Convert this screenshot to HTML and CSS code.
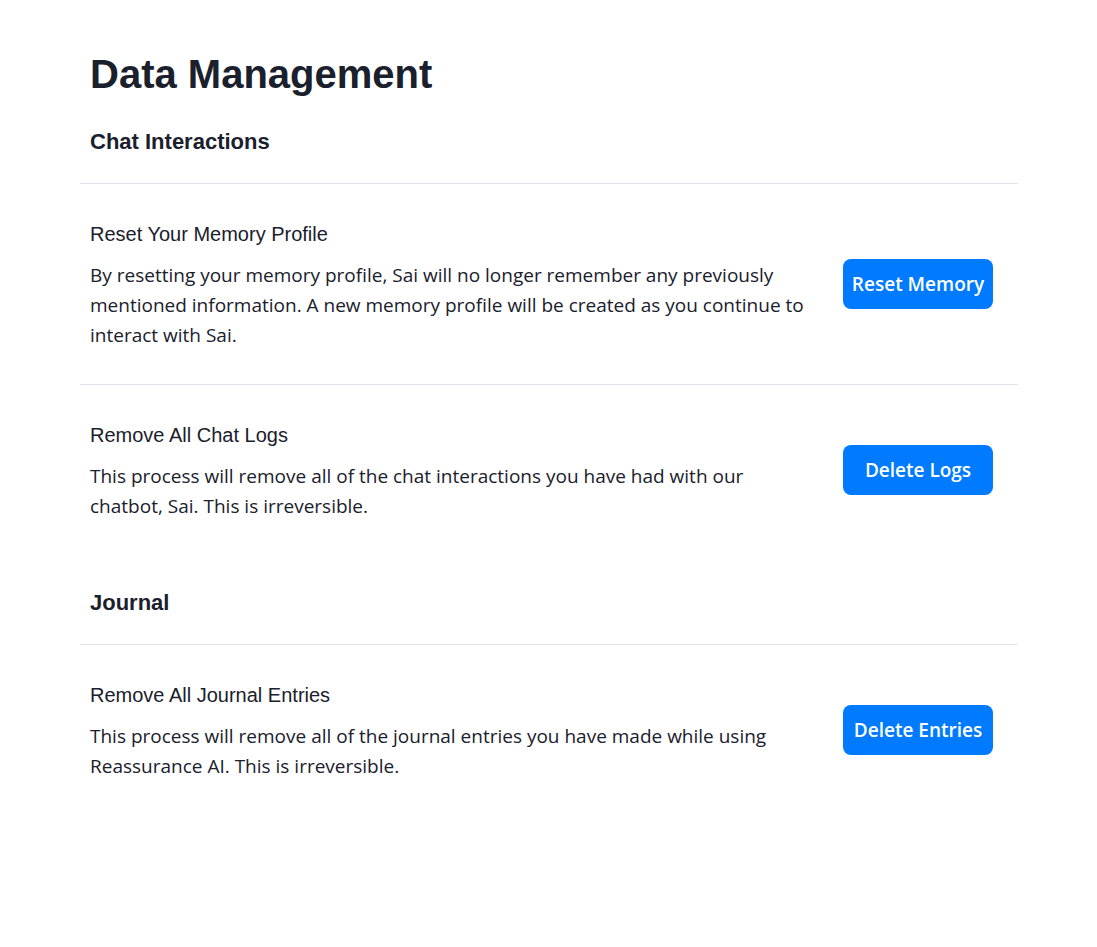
FILE: index.html
```html
<!DOCTYPE html>
<html lang="en">
<head>
  <meta charset="UTF-8" />
  <meta name="viewport" content="width=device-width, initial-scale=1" />
  <title>Data Management</title>
  <link rel="stylesheet" href="styles.css">
</head>
<body>
  <main class="container">
    <h1>Data Management</h1>

    <section>
      <h2>Chat Interactions</h2>
      <div class="setting">
        <div class="setting-text">
          <h3>Reset Your Memory Profile</h3>
          <p>By resetting your memory profile, Sai will no longer remember any previously mentioned information. A new memory profile will be created as you continue to interact with Sai.</p>
        </div>
        <button type="button">Reset Memory</button>
      </div>
      <div class="setting">
        <div class="setting-text">
          <h3>Remove All Chat Logs</h3>
          <p>This process will remove all of the chat interactions you have had with our chatbot, Sai. This is irreversible.</p>
        </div>
        <button type="button">Delete Logs</button>
      </div>
    </section>

    <section>
      <h2>Journal</h2>
      <div class="setting">
        <div class="setting-text">
          <h3>Remove All Journal Entries</h3>
          <p>This process will remove all of the journal entries you have made while using Reassurance AI. This is irreversible.</p>
        </div>
        <button type="button">Delete Entries</button>
      </div>
    </section>
  </main>
</body>
</html>
```

FILE: styles.css
```css
* {
  box-sizing: border-box;
}

body {
  margin: 0;
  background-color: #fff;
  color: #1a202c;
  font-family: "Segoe UI", "Open Sans", "Noto Sans", sans-serif;
  font-size: 19px;
  line-height: 30px;
}

.container {
  padding: 44px 79px 40px 80px;
}

h1,
h2,
h3,
p {
  margin: 0;
}

h1,
h2,
h3 {
  font-family: "Liberation Sans", Arial, sans-serif;
}

h1 {
  padding: 0 10px;
  font-size: 40px;
  line-height: 60px;
}

h2 {
  padding: 23px 10px 26px;
  font-size: 22px;
  line-height: 30px;
}

h3 {
  margin-bottom: 10px;
  font-size: 20px;
  font-weight: 400;
  line-height: 32px;
}

section + section {
  margin-top: 10px;
}

.setting {
  display: flex;
  align-items: center;
  justify-content: space-between;
  gap: 30px;
  padding: 34px 25px 34px 10px;
  border-top: 1px solid #e2e2ea;
}

.setting-text {
  flex: 1;
}

button {
  width: 150px;
  height: 50px;
  padding: 0;
  border: none;
  border-radius: 8px;
  background-color: #007bff;
  color: #fff;
  font-family: inherit;
  font-size: 19px;
  font-weight: 600;
  cursor: pointer;
}

button:hover {
  background-color: #0069d9;
}
```
